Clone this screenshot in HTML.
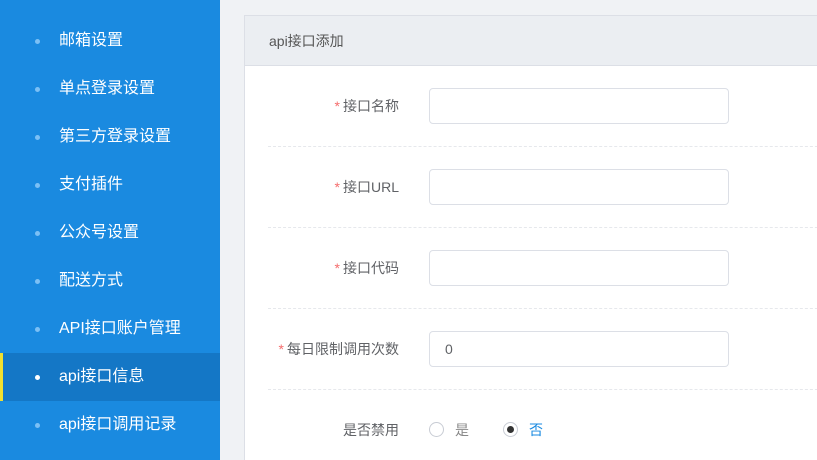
<!DOCTYPE html>
<html><head><meta charset="utf-8"><style>
*{margin:0;padding:0;box-sizing:border-box}
html{width:817px;height:460px;overflow:hidden}
body{width:817px;height:460px;overflow:hidden;background:#f0f2f5;font-family:"Liberation Sans","Noto Sans CJK SC",sans-serif;position:relative}
.side{position:absolute;left:0;top:0;width:220px;height:460px;background:#1a8ae0}
.it{position:absolute;left:0;width:220px;height:48px;line-height:48px;color:#fff;font-size:16px;padding-left:59px}
.it:before{content:"";position:absolute;left:35px;top:22px;width:5px;height:5px;border-radius:50%;background:#7cc0f5}
.it.act{background:#1477c6;border-left:3px solid #f0e030;padding-left:56px}
.it.act:before{background:#fff;left:32px}
.card{position:absolute;left:244px;top:15px;width:600px;height:460px;background:#fff;border:1px solid #dcdfe6}
.hd{height:50px;background:#ebeef2;border-bottom:1px solid #dcdfe6;line-height:50px;padding-left:24px;font-size:14px;color:#555}
.lab{position:absolute;right:444px;font-size:14px;color:#606266;white-space:nowrap}
.lab b{color:#f56c6c;font-weight:normal;margin-right:3px}
.inp{position:absolute;left:184px;width:300px;height:36px;border:1px solid #dcdfe6;border-radius:4px;font-size:14px;color:#606266;line-height:34px;padding-left:15px}
.sep{position:absolute;left:23px;right:0;border-top:1px dashed #e6e8ec}
.rad{position:absolute;top:406px;width:15px;height:15px;border-radius:50%;border:1px solid #c8ccd4}
</style></head><body>
<div class="side">
<div class="it" style="top:17px">邮箱设置</div>
<div class="it" style="top:65px">单点登录设置</div>
<div class="it" style="top:113px">第三方登录设置</div>
<div class="it" style="top:161px">支付插件</div>
<div class="it" style="top:209px">公众号设置</div>
<div class="it" style="top:257px">配送方式</div>
<div class="it" style="top:305px">API接口账户管理</div>
<div class="it act" style="top:353px">api接口信息</div>
<div class="it" style="top:401px">api接口调用记录</div>
</div>
<div class="card">
<div class="hd">api接口添加</div>
<div class="lab" style="top:80px"><b>*</b>接口名称</div>
<div class="inp" style="top:72px"></div>
<div class="sep" style="top:130px"></div>
<div class="lab" style="top:161px"><b>*</b>接口URL</div>
<div class="inp" style="top:153px"></div>
<div class="sep" style="top:211px"></div>
<div class="lab" style="top:242px"><b>*</b>接口代码</div>
<div class="inp" style="top:234px"></div>
<div class="sep" style="top:292px"></div>
<div class="lab" style="top:323px"><b>*</b>每日限制调用次数</div>
<div class="inp" style="top:315px">0</div>
<div class="sep" style="top:373px"></div>
<div class="lab" style="top:404px">是否禁用</div>
<div class="rad" style="left:184px"></div>
<div style="position:absolute;left:210px;top:404px;font-size:14px;color:#888">是</div>
<div class="rad" style="left:258px"><div style="position:absolute;left:3px;top:3px;width:7px;height:7px;border-radius:50%;background:#333"></div></div>
<div style="position:absolute;left:284px;top:404px;font-size:14px;color:#1a8ae0">否</div>
</div>
</body></html>
